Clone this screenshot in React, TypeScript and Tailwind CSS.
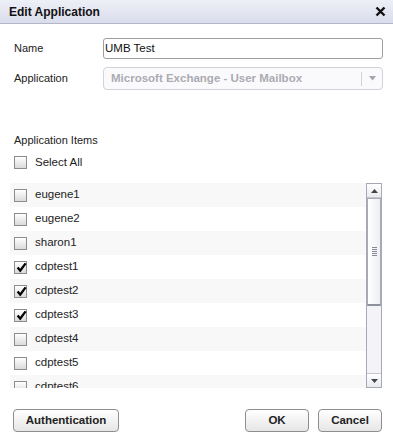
import React from "react";

function Box({ checked }: { checked?: boolean }) {
  return (
    <span className="relative block w-[13px] h-[13px] shrink-0 border border-[#8c8c8c] bg-linear-to-b from-white to-[#dadada]">
      {checked && (
        <svg className="absolute left-[1px] top-[0px]" width="11" height="11" viewBox="0 0 11 11">
          <path d="M1.6 5.6 L4.2 8.6 L9.6 1.4" stroke="#000" strokeWidth="2.3" fill="none" strokeLinejoin="miter" />
        </svg>
      )}
    </span>
  );
}

const items: { name: string; checked?: boolean }[] = [
  { name: "eugene1" },
  { name: "eugene2" },
  { name: "sharon1" },
  { name: "cdptest1", checked: true },
  { name: "cdptest2", checked: true },
  { name: "cdptest3", checked: true },
  { name: "cdptest4" },
  { name: "cdptest5" },
  { name: "cdptest6" },
];

function Btn({ label, w }: { label: string; w: string }) {
  return (
    <button
      className={`${w} h-[23px] rounded-[4px] border border-[#8e8e8e] bg-linear-to-b from-white to-[#e6e6e6] text-[11.5px] font-bold text-[#222] flex items-center justify-center`}
    >
      {label}
    </button>
  );
}

export default function App() {
  return (
    <div className="w-[393px] h-[443px] bg-white flex flex-col font-['Liberation_Sans',Arial,sans-serif] text-[11px] text-[#222] overflow-hidden">
      {/* Title bar */}
      <div className="h-[24px] shrink-0 flex items-center justify-between pl-[9px] pr-[7px] border-b border-[#b3b6c6] bg-linear-to-b from-[#eef0f8] to-[#d9dcea]">
        <span className="text-[12px] font-bold text-[#111]">Edit Application</span>
        <svg width="11" height="11" viewBox="0 0 11 11">
          <path d="M1.5 1.5 L9.5 9.5 M9.5 1.5 L1.5 9.5" stroke="#111" strokeWidth="2.4" />
        </svg>
      </div>

      {/* Form */}
      <div className="flex flex-col pl-[14px] pr-[10px] pt-[14px]">
        <div className="flex items-center h-[21px]">
          <span className="w-[89px]">Name</span>
          <div className="flex-1 h-[21px] rounded-[3px] border border-[#9e9e9e] flex items-center pl-[1px] text-[11.5px] text-[#111]">
            UMB Test
          </div>
        </div>
        <div className="flex items-center h-[23px] mt-[8px]">
          <span className="w-[89px]">Application</span>
          <div className="flex-1 h-[23px] rounded-[4px] border border-[#d2d2da] bg-[#fafafc] flex items-center pl-[7px]">
            <span className="flex-1 text-[11.5px] font-bold text-[#ababb2]">Microsoft Exchange - User Mailbox</span>
            <span className="w-px h-[14px] bg-[#d2d2d8]" />
            <span className="w-[20px] flex items-center justify-center">
              <svg width="7" height="5" viewBox="0 0 7 5">
                <path d="M0 0 L7 0 L3.5 4.5 Z" fill="#a4a4ac" />
              </svg>
            </span>
          </div>
        </div>

        <div className="mt-[43px] h-[14px] leading-[14px]">Application Items</div>
        <div className="mt-[8px] flex items-center gap-[8px] h-[15px]">
          <Box />
          <span className="text-[11.5px]">Select All</span>
        </div>
      </div>

      {/* List */}
      <div className="mt-[13px] ml-[10px] mr-[11px] h-[205px] flex">
        <div className="flex-1 overflow-hidden">
          {items.map((it, i) => (
            <div
              key={it.name}
              className={`h-[24px] flex items-center gap-[8px] pl-[4px] ${i % 2 === 0 ? "bg-[#f8f8f8]" : "bg-white"}`}
            >
              <Box checked={it.checked} />
              <span className="text-[11.5px]">{it.name}</span>
            </div>
          ))}
        </div>
        <div className="w-[16px] h-full border border-[#a6a8b6] bg-[#f4f4f8] flex flex-col">
          <div className="h-[14px] shrink-0 border-b border-[#c4c6d0] bg-linear-to-b from-white to-[#e9eaf0] flex items-center justify-center">
            <svg width="7" height="4" viewBox="0 0 7 4">
              <path d="M0 4 L7 4 L3.5 0 Z" fill="#444" />
            </svg>
          </div>
          <div className="h-[108px] shrink-0 border border-[#a8aab8] border-b-2 border-b-[#8e909e] bg-linear-to-r from-white to-[#eeeff4] flex items-center justify-center">
            <div className="flex flex-col gap-[1px]">
              <span className="block w-[5px] h-px bg-[#8a8a96]" />
              <span className="block w-[5px] h-px bg-[#8a8a96]" />
              <span className="block w-[5px] h-px bg-[#8a8a96]" />
              <span className="block w-[5px] h-px bg-[#8a8a96]" />
              <span className="block w-[5px] h-px bg-[#8a8a96]" />
            </div>
          </div>
          <div className="flex-1" />
          <div className="h-[14px] shrink-0 border-t border-[#c4c6d0] bg-linear-to-b from-white to-[#e9eaf0] flex items-center justify-center">
            <svg width="7" height="4" viewBox="0 0 7 4">
              <path d="M0 0 L7 0 L3.5 4 Z" fill="#444" />
            </svg>
          </div>
        </div>
      </div>

      {/* Buttons */}
      <div className="mt-[21px] flex items-center pl-[13px] pr-[11px]">
        <Btn label="Authentication" w="w-[106px]" />
        <div className="flex-1" />
        <Btn label="OK" w="w-[64px]" />
        <div className="w-[9px]" />
        <Btn label="Cancel" w="w-[64px]" />
      </div>
    </div>
  );
}
